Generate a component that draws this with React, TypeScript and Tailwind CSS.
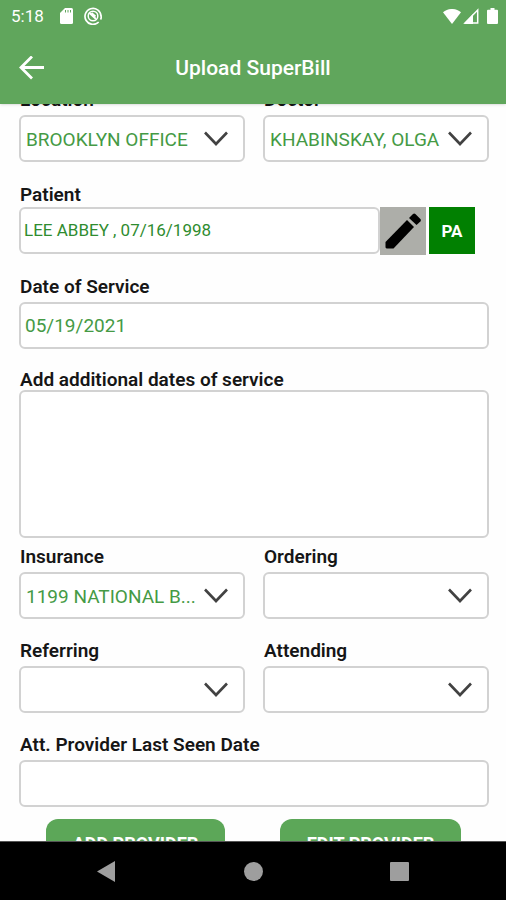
import React, { useLayoutEffect, useRef } from 'react';

interface FieldProps {
    id: string;
    label: string;
    value?: string;
}

const boxClass = "w-full rounded-md border-2 border-[#d2d2d2] bg-white";

const FieldLabel: React.FC<{ id: string; label: string }> = ({ id, label }) => (
    <label htmlFor={id} className="block whitespace-nowrap pl-px text-[19px] leading-5 font-semibold text-[#161616]">
        {label}
    </label>
);

const SelectField: React.FC<FieldProps> = ({ id, label, value = "" }) => (
    <div className="flex min-w-0 flex-col gap-[5px]">
        <FieldLabel id={id} label={label} />
        <div className="relative">
            <select id={id} defaultValue={value} className={`${boxClass} h-[47px] appearance-none truncate pt-[3px] pr-11 pl-[5px] text-[19px] text-[#459a45]`}>
                <option value={value}>{value}</option>
            </select>
            <svg className="pointer-events-none absolute top-4 right-[17px] h-4 w-6" viewBox="0 0 24 16" fill="none" stroke="#424242" strokeWidth="2.6">
                <path d="M1 1.500 12 13 23 1.500" />
            </svg>
        </div>
    </div>
);

const DateField: React.FC<FieldProps> = ({ id, label, value = "" }) => (
    <div className="flex flex-col gap-[5px]">
        <FieldLabel id={id} label={label} />
        <input id={id} type="text" defaultValue={value} className={`${boxClass} h-[47px] px-1 text-[19px] text-[#459a45]`} />
    </div>
);

const StatusBar = () => (
    <div className="flex h-8 items-center justify-between pl-[11px] pr-2 text-white">
        <div className="flex items-center">
            <span className="text-[17px] leading-8">5:18</span>
            <svg className="ml-4 h-4 w-[13px]" viewBox="0 0 13 16">
                <path fill="currentColor" d="M5 0h6.5A1.5 1.5 0 0 1 13 1.500v13a1.500 1.500 0 0 1-1.500 1.500h-10A1.500 1.500 0 0 1 0 14.500V5z" />
                <path stroke="#60a65c" strokeWidth="1" d="M5.500 2v2.500M8 2v2.500M10.500 2v2.500" />
            </svg>
            <svg className="ml-[11px] h-[18px] w-[18px]" viewBox="0 0 18 18" fill="none" stroke="currentColor">
                <path strokeWidth="1.700" d="M14.700 15A8 8 0 1 1 17 9a4 4 0 0 1-.5 3.500" />
                <circle cx="9" cy="9" r="4.800" strokeWidth="1.500" />
                <path strokeWidth="1.800" d="M5.500 6 12 12M7.500 6l4 3.500" />
            </svg>
        </div>
        <div className="flex items-center">
            <svg className="h-[15px] w-[18px]" viewBox="0 0 18 15" fill="currentColor">
                <path d="M0 3.200C5-1.100 13-1.100 18 3.200L9 15z" />
            </svg>
            <svg className="ml-0.5 h-4 w-4" viewBox="0 0 16 16" fill="none">
                <path stroke="currentColor" strokeWidth="1.500" d="M14.700 2v13H2z" />
                <path fill="currentColor" d="M10 6v10H1z" />
            </svg>
            <svg className="ml-2 h-4 w-[11px]" viewBox="0 0 11 16" fill="currentColor">
                <path d="M3.500 0h4v1.700H10a1 1 0 0 1 1 1V15a1 1 0 0 1-1 1H1a1 1 0 0 1-1-1V2.700a1 1 0 0 1 1-1h2.500z" />
            </svg>
        </div>
    </div>
);

const App = () => {
    const scroller = useRef<HTMLElement>(null);

    // the form opens slightly scrolled, with the first labels under the header
    useLayoutEffect(() => {
        if (scroller.current) {
            scroller.current.scrollTop = 24;
        }
    }, []);

    return (
        <div className="flex h-screen flex-col bg-[#fefefe] font-[Roboto,sans-serif]">
            <header className="z-10 shrink-0 bg-[#60a65c] shadow-sm">
                <StatusBar />
                <div className="grid h-[72px] grid-cols-[64px_1fr_64px] items-center text-white">
                    <button type="button" aria-label="Back" className="pl-[19px]">
                        <svg className="h-6 w-[25px]" viewBox="0 0 25 24" fill="none" stroke="currentColor" strokeWidth="2.800">
                            <path d="M25 11.500H2M13 .5 2 11.500l11 11" />
                        </svg>
                    </button>
                    <h1 className="pt-0.5 text-center text-[21px] font-medium">Upload SuperBill</h1>
                </div>
            </header>

            <main ref={scroller} className="min-h-0 flex-1 overflow-y-auto pt-2.5 pr-[17px] pl-[19px] [scrollbar-width:none]">
                <div className="grid grid-cols-2 gap-x-[18px]">
                    <SelectField id="location" label="Location" value="BROOKLYN OFFICE" />
                    <SelectField id="doctor" label="Doctor" value="KHABINSKAY, OLGA" />
                </div>

                <div className="mt-[23px] flex flex-col gap-0.5">
                    <FieldLabel id="patient" label="Patient" />
                    <div className="flex pr-3.5">
                        <input id="patient" type="text" defaultValue="LEE ABBEY , 07/16/1998" className={`${boxClass} h-[47px] min-w-0 flex-1 px-[3px] pb-0.5 text-[17px] text-[#2f8c2f]`} />
                        <button type="button" aria-label="Edit patient" className="flex h-12 w-[46px] items-center justify-center bg-[#adaea9]">
                            <svg className="h-9 w-9" viewBox="0 0 36 36" fill="#000">
                                <path d="M.5 29 22 7l7 7L8.500 35.500H1.500l-1-1z" />
                                <path d="m24 5 4-4q1.200-1 2.400 0l5 5q1 1.200 0 2.400L31.500 12z" />
                            </svg>
                        </button>
                        <button type="button" className="ml-[3px] h-[47px] w-[46px] bg-[#018001] pt-0.5 text-[17px] font-bold text-white">PA</button>
                    </div>
                </div>

                <div className="mt-[22px]">
                    <DateField id="service-date" label="Date of Service" value="05/19/2021" />
                </div>

                <div className="mt-[21px]">
                    <FieldLabel id="more-dates" label="Add additional dates of service" />
                    <textarea id="more-dates" className={`${boxClass} block h-[148px] resize-none p-1.5 text-[19px] text-[#459a45]`} />
                </div>

                <div className="mt-[9px] grid grid-cols-2 gap-x-[18px] gap-y-[22px]">
                    <SelectField id="insurance" label="Insurance" value="1199 NATIONAL B..." />
                    <SelectField id="ordering" label="Ordering" />
                    <SelectField id="referring" label="Referring" />
                    <SelectField id="attending" label="Attending" />
                </div>

                <div className="mt-[22px]">
                    <DateField id="last-seen" label="Att. Provider Last Seen Date" />
                </div>

                <div className="mt-3 flex justify-between pr-7 pb-6 pl-[27px]">
                    <button type="button" className="h-[50px] w-[179px] rounded-xl bg-[#5ca758] text-lg font-bold text-white">ADD PROVIDER</button>
                    <button type="button" className="h-[50px] w-[181px] rounded-xl bg-[#5ca758] text-lg font-bold text-white">EDIT PROVIDER</button>
                </div>
            </main>

            <nav className="grid h-[59px] shrink-0 grid-cols-[1fr_40px_1fr] items-center border-t border-[#555] bg-black text-[#9e9e9e]">
                <button type="button" aria-label="Back" className="mr-[118px] justify-self-end">
                    <svg className="h-[21px] w-[18px]" viewBox="0 0 18 21" fill="currentColor">
                        <path d="M18 0v21L0 10.500z" />
                    </svg>
                </button>
                <button type="button" aria-label="Home" className="h-[19px] w-[19px] justify-self-center rounded-full bg-[#9e9e9e]" />
                <button type="button" aria-label="Recent apps" className="ml-[117px] h-[19px] w-[19px] rounded-[1px] bg-[#9e9e9e]" />
            </nav>
        </div>
    );
};

export default App;
